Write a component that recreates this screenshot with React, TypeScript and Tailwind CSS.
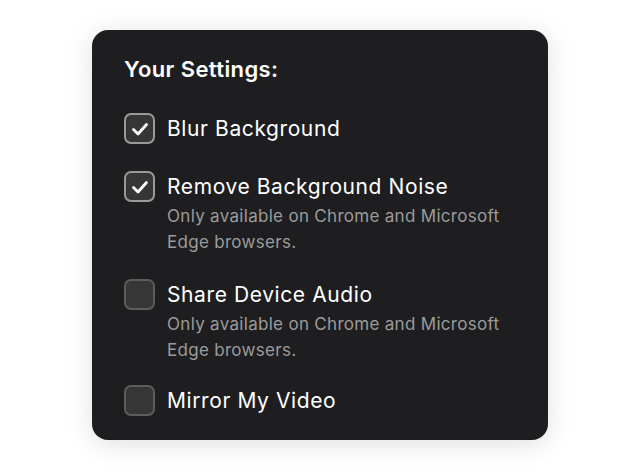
import React from "react";

function Box({ checked }: { checked: boolean }) {
  return (
    <div
      className={
        "w-[31px] h-[31px] shrink-0 rounded-[7px] border-2 bg-[#363636] flex items-center justify-center " +
        (checked ? "border-[#9a9a9a]" : "border-[#5c5c5c]")
      }
    >
      {checked && (
        <svg width="20" height="20" viewBox="0 0 20 20" fill="none">
          <path d="M3.5 10.5 L8 15 L16.5 5.5" stroke="#ffffff" strokeWidth="2.8" strokeLinecap="round" strokeLinejoin="round" />
        </svg>
      )}
    </div>
  );
}

function Row({ checked, label, sub, className }: { checked: boolean; label: string; sub?: boolean; className?: string }) {
  return (
    <div className={"flex items-start gap-3 " + (className ?? "")}>
      <Box checked={checked} />
      <div className="flex flex-col">
        <div className="text-[21px] leading-[31px] tracking-[0.6px] text-white">{label}</div>
        {sub && (
          <div className="text-[17px] leading-[26px] tracking-[0.3px] text-[#9b9b9b] mt-[1px] w-[348px]">
            Only available on Chrome and Microsoft Edge browsers.
          </div>
        )}
      </div>
    </div>
  );
}

export default function App() {
  return (
    <div className="w-[640px] h-[472px] bg-white flex justify-center" style={{ fontFamily: "Inter, 'Noto Sans', sans-serif" }}>
      <div className="mt-[30px] w-[456px] h-[410px] rounded-[16px] bg-[#1e1e20] shadow-[0_4px_28px_rgba(0,0,0,0.13)] px-8 pt-6 pb-6 flex flex-col">
        <div className="text-[22px] leading-[30px] font-semibold text-white tracking-[0.4px]">Your Settings:</div>
        <Row className="mt-[29px]" checked label="Blur Background" />
        <Row className="mt-[27px]" checked label="Remove Background Noise" sub />
        <Row className="mt-[24px]" checked={false} label="Share Device Audio" sub />
        <Row className="mt-[22px]" checked={false} label="Mirror My Video" />
      </div>
    </div>
  );
}
